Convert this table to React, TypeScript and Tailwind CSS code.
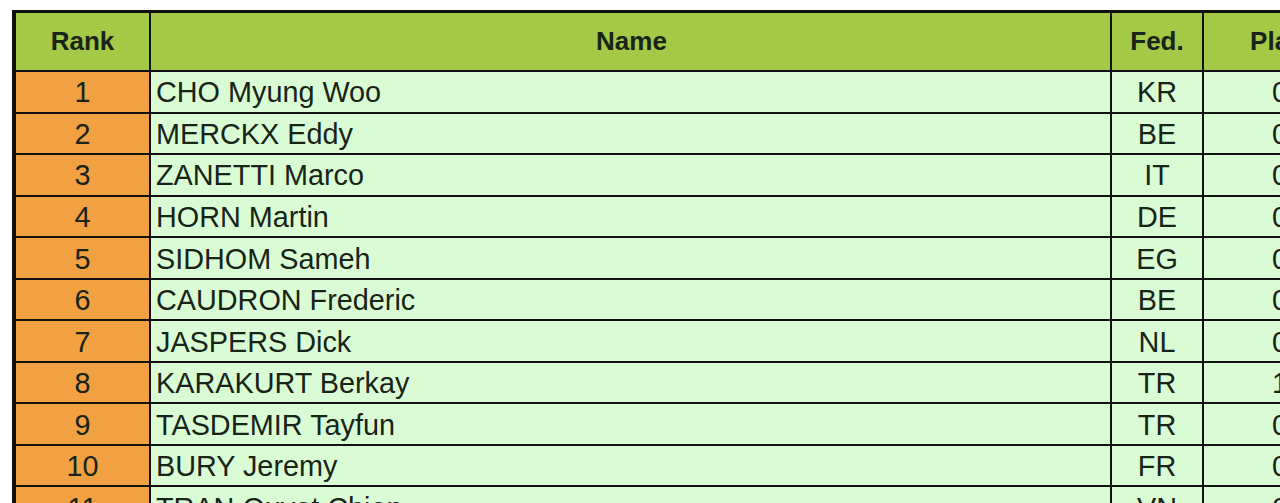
const players = [
  { rank: 1, name: 'CHO Myung Woo', fed: 'KR', pla: '0.5' },
  { rank: 2, name: 'MERCKX Eddy', fed: 'BE', pla: '0.5' },
  { rank: 3, name: 'ZANETTI Marco', fed: 'IT', pla: '0.5' },
  { rank: 4, name: 'HORN Martin', fed: 'DE', pla: '0.5' },
  { rank: 5, name: 'SIDHOM Sameh', fed: 'EG', pla: '0.5' },
  { rank: 6, name: 'CAUDRON Frederic', fed: 'BE', pla: '0.5' },
  { rank: 7, name: 'JASPERS Dick', fed: 'NL', pla: '0.5' },
  { rank: 8, name: 'KARAKURT Berkay', fed: 'TR', pla: '1.5' },
  { rank: 9, name: 'TASDEMIR Tayfun', fed: 'TR', pla: '0.5' },
  { rank: 10, name: 'BURY Jeremy', fed: 'FR', pla: '0.5' },
  { rank: 11, name: 'TRAN Quyet Chien', fed: 'VN', pla: '0.5' },
];

export default function App() {
  return (
    <div
      className="w-[1280px] h-[503px] overflow-hidden bg-white pt-[10px] pl-[12px] text-[#172417]"
      style={{ fontFamily: '"Liberation Sans", Arial, sans-serif' }}
    >
      <div className="w-[1400px] border-t-[3px] border-l-4 border-[#111]">
        {/* header */}
        <div className="flex h-[59px] bg-[#a4c947] border-b-2 border-[#111] text-[26px] font-bold">
          <div className="w-[135px] shrink-0 border-r-2 border-[#111] flex items-center justify-center pb-[1px]">
            Rank
          </div>
          <div className="w-[961px] shrink-0 border-r-2 border-[#111] flex items-center justify-center pb-[1px] pl-[2px]">
            Name
          </div>
          <div className="w-[92px] shrink-0 border-r-2 border-[#111] flex items-center justify-center pb-[1px]">
            Fed.
          </div>
          <div className="w-[176px] shrink-0 flex items-center justify-center pb-[1px]">
            Played
          </div>
        </div>
        {players.map((p) => (
          <div
            key={p.rank}
            className="flex h-[41.56px] border-b-2 border-[#111] text-[28.8px] leading-none"
          >
            <div className="w-[135px] shrink-0 bg-[#f2a142] border-r-2 border-[#111] flex items-center justify-center pt-[2px]">
              {p.rank}
            </div>
            <div className="w-[961px] shrink-0 bg-[#dafcd4] border-r-2 border-[#111] flex items-center pl-[5px] pt-[2px]">
              {p.name}
            </div>
            <div className="w-[92px] shrink-0 bg-[#dafcd4] border-r-2 border-[#111] flex items-center justify-center pt-[2px]">
              {p.fed}
            </div>
            <div className="w-[176px] shrink-0 bg-[#dafcd4] flex items-center justify-center pt-[2px]">
              {p.pla}
            </div>
          </div>
        ))}
      </div>
    </div>
  );
}
